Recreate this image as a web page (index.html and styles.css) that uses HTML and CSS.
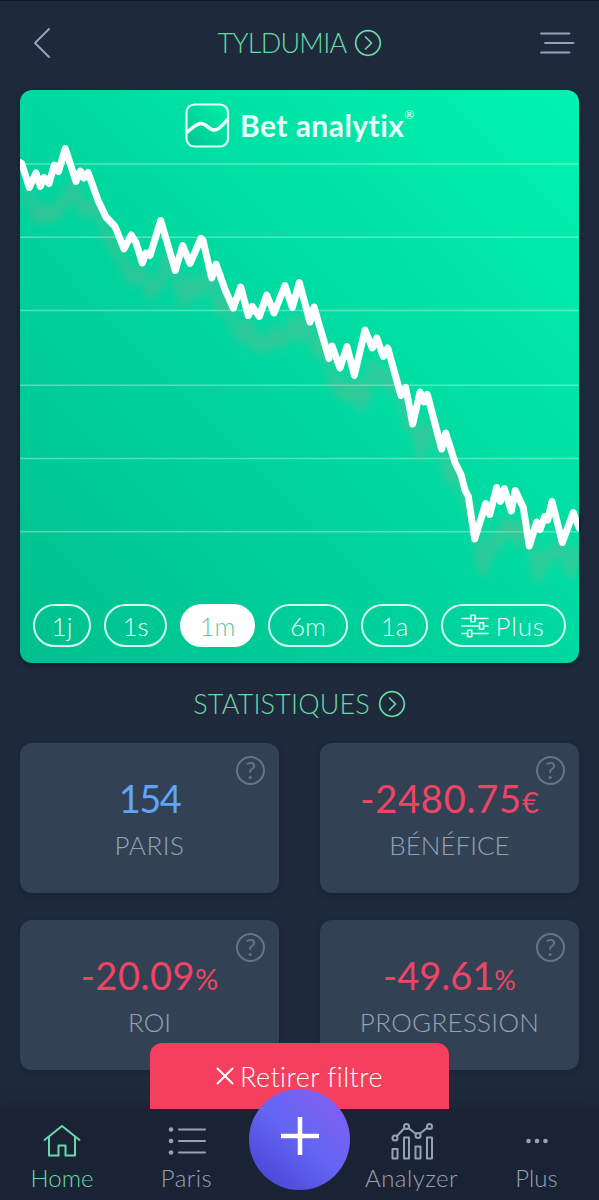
FILE: index.html
```html
<!DOCTYPE html>
<html lang="fr">
<head>
<meta charset="utf-8">
<title>Bet analytix</title>
<link rel="stylesheet" href="styles.css">
</head>
<body>
<div class="app">
  <header class="topbar">
    <svg class="back" width="18" height="32" viewBox="0 0 18 32"><path d="M16 2 2 16 16 30"/></svg>
    <h1 class="title title-main"><span>TYLDUMIA</span>
      <svg class="go" width="28" height="28" viewBox="0 0 28 28"><circle cx="14" cy="14" r="12.3"/><path d="M11.5 8l6 6-6 6"/></svg>
    </h1>
    <svg class="menu" width="36" height="24" viewBox="0 0 36 24"><path d="M2 2.5h28.500M6 12h28.500M2 21.500h28.500"/></svg>
  </header>

  <main>
    <section class="chart-card">
      <div class="plot">
        <svg class="chart" width="559" height="573" viewBox="20 90.500 559 573">
          <defs>
            <filter id="soft" x="-10%" y="-10%" width="120%" height="130%"><feGaussianBlur stdDeviation="5"/></filter>
            <polyline id="curve" points="20,163 21.700,164 29.300,188 36,173.500 40.300,187 44,178 49,184 54.300,165.500 58.500,172 65.300,149 76,182 80.300,171.500 84,178.500 88,173 98.300,201.500 106,217.500 115,227 124,249.500 131.300,235.500 136,243 142.300,263.500 146,253.500 150,256 160.700,221 175.300,271 182.700,246 190,264 201,239 203,241 211.700,278.500 216,264.500 225,290 233.300,308.500 240.700,287.500 248.300,316 252.300,307 259.300,317 266.700,295.500 274,313.500 285,286 292.300,308 299.300,283 310,322.500 314,307.500 329,359 332,346.500 340,368.500 347,347 354.300,376 365,330.500 372.300,348.500 376.700,338.500 383.300,357 387.700,348.500 401,396 405.700,388 412.700,424.500 420,392.500 424,402.500 427.300,395 441.700,449.500 445.700,433.500 455,463 461,475 465,490.500 468.300,497 474.700,539.500 485.700,504 489.700,515 496.700,488 500.300,502 504.300,489 511.300,511.500 515.300,491 523.300,508 529.300,546.500 536.700,522.500 540,530 544.700,517 547.700,520.500 552,502 562.300,543 573.300,513 579,528"/>
          </defs>
          <path class="grid" d="M20 164.500h559M20 237.700h559M20 311h559M20 385.700h559M20 459h559M20 532.300h559"/>
          <use class="curve-shadow" href="#curve" x="8" y="33" filter="url(#soft)"/>
          <use class="curve-line" href="#curve"/>
        </svg>
        <div class="brand">
          <svg width="45" height="45" viewBox="0 0 45 45">
            <defs><linearGradient id="tile" x1="1" y1="0" x2="0" y2="1"><stop offset="0" stop-color="#00efaa"/><stop offset="1" stop-color="#00c592"/></linearGradient></defs>
            <rect x="1.500" y="1.500" width="41.500" height="42" rx="8" fill="url(#tile)" stroke="#e2fff7" stroke-width="2.200"/>
            <path d="M2.500 29C8 24 12 20.500 16 20.500c6 0 8 7 14 6.500 4-.5 8-5 12-10" fill="none" stroke="#f0fffa" stroke-width="3.600"/>
          </svg>
          <span class="brand-name">Bet analytix</span><sup>®</sup>
        </div>
        <nav class="ranges">
          <button class="pill w-1j">1j</button>
          <button class="pill w-1s">1s</button>
          <button class="pill w-1m active">1m</button>
          <button class="pill w-6m">6m</button>
          <button class="pill w-1a">1a</button>
          <button class="pill w-plus">
            <svg width="28" height="24" viewBox="0 0 28 24"><path d="M1 4.500h9M14 4.500h13M1 12h17M23 12h4M1 19.500h5.500M11 19.500h16M10 1.200h4v6.600h-4zM18.500 8.700h4v6.600h-4zM6.700 16.200h4v6.600h-4z"/></svg>
            <span>Plus</span>
          </button>
        </nav>
      </div>
    </section>

    <h2 class="title title-stats"><span>STATISTIQUES</span>
      <svg class="go" width="28" height="28" viewBox="0 0 28 28"><circle cx="14" cy="14" r="12.300"/><path d="M11.500 8l6 6-6 6"/></svg>
    </h2>

    <section class="stats">
      <article class="stat"><i class="help">?</i><p class="value blue v-paris">154</p><p class="label l-paris">PARIS</p></article>
      <article class="stat"><i class="help">?</i><p class="value red v-ben">-2480.75<small>€</small></p><p class="label l-ben">BÉNÉFICE</p></article>
      <article class="stat"><i class="help">?</i><p class="value red v-roi">-20.09<small>%</small></p><p class="label l-roi">ROI</p></article>
      <article class="stat"><i class="help">?</i><p class="value red v-prog">-49.61<small>%</small></p><p class="label l-prog">PROGRESSION</p></article>
    </section>
  </main>

  <footer class="dock">
    <button class="clear-filter"><svg width="18" height="18" viewBox="0 0 18 18"><path d="M1.500 1.500l15 15M16.500 1.500l-15 15"/></svg><span>Retirer filtre</span></button>
    <nav class="tabs">
      <a class="tab on t-home"><svg width="38" height="38" viewBox="0 0 38 38"><path d="M1.500 17 19 3l17.500 14M6 14v18.500h9.500V22.500h7v10H32V14"/></svg><span>Home</span></a>
      <a class="tab t-paris"><svg width="38" height="38" viewBox="0 0 38 38"><path d="M11 6.500h26M11 18h26M11 29.500h26"/><g class="dots"><circle cx="3" cy="6.500" r="2.300"/><circle cx="3" cy="18" r="2.300"/><circle cx="3" cy="29.500" r="2.300"/></g></svg><span>Paris</span></a>
      <span class="gap"></span>
      <a class="tab t-ana"><svg width="42" height="38" viewBox="0 0 42 38"><path d="M1.500 26h5v9.500h-5zM13 14.500h5v21h-5zM24.500 23.500h5v12h-5zM36 14.500h5v21h-5zM6 13l7.500-8M17.500 5l7.500 6M29 10.500l7-5.500"/><circle cx="4" cy="15" r="2.500"/><circle cx="15.500" cy="3.500" r="2.500"/><circle cx="27" cy="12.500" r="2.500"/><circle cx="38.500" cy="3.500" r="2.500"/></svg><span>Analyzer</span></a>
      <a class="tab t-plus"><svg width="38" height="38" viewBox="0 0 38 38"><g class="dots"><circle cx="10.500" cy="18" r="2.300"/><circle cx="19" cy="18" r="2.300"/><circle cx="27.500" cy="18" r="2.300"/></g></svg><span>Plus</span></a>
    </nav>
    <button class="add"><svg width="38" height="38" viewBox="0 0 38 38"><path d="M0 19h38M19 0v38"/></svg></button>
  </footer>
</div>
</body>
</html>
```

FILE: styles.css
```css
* { box-sizing: border-box; margin: 0; padding: 0; }
body { background: #1e293b; font-family: Lato, "Open Sans", sans-serif; font-weight: 300; font-variant-ligatures: none; }
button { font: inherit; color: inherit; border: 0; background: none; }
svg { display: block; flex: none; fill: none; stroke: currentColor; stroke-width: 2; stroke-linecap: round; stroke-linejoin: round; }

.app { position: relative; width: 599px; height: 1200px; overflow: hidden; border-top: 1px solid #11152a; }

.topbar { display: grid; grid-template-columns: 60px 1fr 60px; align-items: center; height: 89.400px; padding: 0 24px 6px 25px; color: #94a3b8; }
.back { margin-left: 8px; }
.menu { justify-self: end; stroke-width: 1.8; }
.title { display: flex; align-items: center; justify-content: center; gap: 8px; font-size: 27px; font-weight: 300; line-height: 32px; color: #68d9a4; }
.title-main span { letter-spacing: -.75px; }
.go { stroke-width: 1.7; }

main { padding: 0 20px; }
.chart-card { height: 573px; border-radius: 12px; overflow: hidden; background: linear-gradient(to top right, #00bf8f 0%, #00d8a1 50%, #00f4af 100%); box-shadow: 0 2px 5px #131d2d; }
.plot { position: relative; height: 100%; }
.grid { stroke: #fff; stroke-opacity: .33; stroke-width: 1.6; }
.curve-line { stroke: #fff; stroke-width: 7; }
.curve-shadow { stroke: #c09a7c; stroke-opacity: .28; stroke-width: 8; }

.brand { position: absolute; top: 12.500px; left: 165px; display: flex; align-items: flex-start; color: #e9fff9; }
.brand-name { margin-left: 10px; font-size: 30px; font-weight: 700; line-height: 45px; letter-spacing: .45px; }
.brand sup { font-size: 12px; line-height: 14px; margin-top: 5px; font-weight: 400; }

.ranges { position: absolute; left: 13px; bottom: 16px; display: flex; gap: 13px; font-size: 26px; color: #e9fff8; }
.pill { display: flex; align-items: center; justify-content: center; gap: 7px; height: 43.500px; border: 2px solid #d4f8ed; border-radius: 22px; line-height: 40px; }
.pill svg { stroke-width: 1.6; }
.active { background: #fff; border-color: #fff; color: #63c99d; }
.w-1j { width: 58px; }
.w-1s { width: 63px; }
.w-1m { width: 75px; }
.w-6m { width: 80px; }
.w-1a { width: 67px; }
.w-plus { width: 125px; padding-right: 2px; letter-spacing: .7px; }

.title-stats { height: 80px; padding-top: 1px; }
.title-stats span { letter-spacing: .15px; }

.stats { display: grid; grid-template-columns: 259px 259px; justify-content: space-between; row-gap: 27px; }
.stat { position: relative; height: 150px; padding-top: 31px; border-radius: 12px; text-align: center; background: #334155; box-shadow: 0 2px 5px #192436; }
.help { position: absolute; top: 13px; right: 14px; width: 29px; height: 29px; border: 2px solid #64748b; border-radius: 50%; color: #64748b; font-size: 24px; font-weight: 400; font-style: normal; line-height: 24px; }
.value { height: 48px; font-size: 38px; font-weight: 400; line-height: 48px; letter-spacing: .5px; white-space: nowrap; }
.value small { font-size: 29px; line-height: 1; letter-spacing: 0; }
.v-paris { letter-spacing: -1.500px; }
.v-ben { letter-spacing: .8px; }
.v-prog { letter-spacing: 0; }
.v-prog small { font-size: 27px; }
.blue { color: #60a5fa; }
.red { color: #ef4565; }
.label { margin-top: 7px; font-size: 26px; line-height: 32px; color: #94a3b8; }
.l-paris { letter-spacing: .5px; }
.l-prog { letter-spacing: .3px; }

.dock { position: absolute; left: 0; right: 0; bottom: 0; height: 91px; background: #1a2333; box-shadow: 0 -4px 12px #1a2436; color: #94a3b8; }
.clear-filter { position: absolute; left: 150px; top: -66px; width: 299px; height: 66px; display: flex; justify-content: center; align-items: center; gap: 6px; border-radius: 12px 12px 0 0; background: #f43f5e; color: #fff; font-size: 27px; letter-spacing: .4px; }
.tabs { display: grid; grid-template-columns: 124px 125px 100px 125px 125px; height: 100%; }
.tab { display: flex; flex-direction: column; align-items: center; padding: 14px 0 0; font-size: 24px; line-height: 30px; gap: 2px; }
.t-paris { letter-spacing: .5px; }
.t-ana { letter-spacing: .45px; }
.tab.on { color: #68d9ac; }
.dots { fill: currentColor; stroke: none; }
.add { position: absolute; left: 249px; top: -20px; display: grid; place-items: center; width: 101px; height: 101px; padding-bottom: 7px; border-radius: 50%; background: linear-gradient(40deg, #4743d2 5%, #6366f1 50%, #8b5cf6 100%); color: #fff; }
.add svg { stroke-width: 4.500; stroke-linecap: butt; }
```
